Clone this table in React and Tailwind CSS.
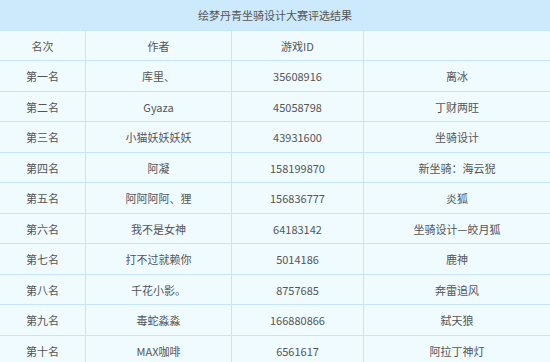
import React from "react";

const rows = [
  ["第一名", "库里、", "35608916", "离冰"],
  ["第二名", "Gyaza", "45058798", "丁财两旺"],
  ["第三名", "小猫妖妖妖妖", "43931600", "坐骑设计"],
  ["第四名", "阿凝", "158199870", "新坐骑：海云猊"],
  ["第五名", "阿阿阿阿、狸", "156836777", "炎狐"],
  ["第六名", "我不是女神", "64183142", "坐骑设计—皎月狐"],
  ["第七名", "打不过就赖你", "5014186", "鹿神"],
  ["第八名", "千花小影。", "8757685", "奔雷追风"],
  ["第九名", "毒蛇淼淼", "166880866", "弑天狼"],
  ["第十名", "MAX咖啡", "6561617", "阿拉丁神灯"],
];

function Row({ cells }) {
  return (
    <div className="grid grid-cols-[85px_146px_132px_187px] h-[30.5px] border-t border-[#c6e5fb] bg-[#f0fbff]">
      {cells.map((c, i) => (
        <div
          key={i}
          className={
            "flex items-center justify-center pt-[1px] " +
            (i > 0 ? "border-l border-[#c6e5fb]" : "")
          }
        >
          {c}
        </div>
      ))}
    </div>
  );
}

export default function App() {
  return (
    <div
      className="w-[550px] h-[362px] overflow-hidden bg-[#f0fbff] text-[11px] text-[#555555]"
      style={{ fontFamily: '"Noto Sans CJK SC", "Noto Sans", sans-serif' }}
    >
      <div className="h-[29.5px] bg-[#cde9fc] flex items-center justify-center pt-[1px]">
        绘梦丹青坐骑设计大赛评选结果
      </div>
      <Row cells={["名次", "作者", "游戏ID", ""]} />
      {rows.map((r, i) => (
        <Row key={i} cells={r} />
      ))}
    </div>
  );
}
